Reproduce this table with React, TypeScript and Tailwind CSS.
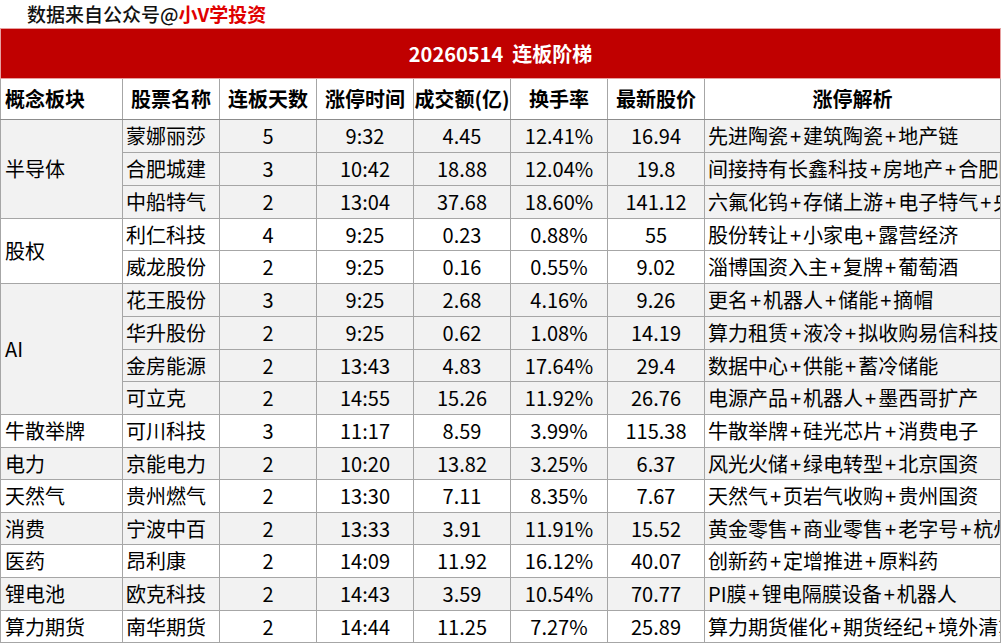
type Stock = {
  name: string;
  days: number;
  time: string;
  amount: string;
  turnover: string;
  price: string;
  reason: string;
};

type Group = { concept: string; stocks: Stock[] };

const groups: Group[] = [
  {
    concept: "半导体",
    stocks: [
      { name: "蒙娜丽莎", days: 5, time: "9:32", amount: "4.45", turnover: "12.41%", price: "16.94", reason: "先进陶瓷+建筑陶瓷+地产链" },
      { name: "合肥城建", days: 3, time: "10:42", amount: "18.88", turnover: "12.04%", price: "19.8", reason: "间接持有长鑫科技+房地产+合肥国资" },
      { name: "中船特气", days: 2, time: "13:04", amount: "37.68", turnover: "18.60%", price: "141.12", reason: "六氟化钨+存储上游+电子特气+央企" },
    ],
  },
  {
    concept: "股权",
    stocks: [
      { name: "利仁科技", days: 4, time: "9:25", amount: "0.23", turnover: "0.88%", price: "55", reason: "股份转让+小家电+露营经济" },
      { name: "威龙股份", days: 2, time: "9:25", amount: "0.16", turnover: "0.55%", price: "9.02", reason: "淄博国资入主+复牌+葡萄酒" },
    ],
  },
  {
    concept: "AI",
    stocks: [
      { name: "花王股份", days: 3, time: "9:25", amount: "2.68", turnover: "4.16%", price: "9.26", reason: "更名+机器人+储能+摘帽" },
      { name: "华升股份", days: 2, time: "9:25", amount: "0.62", turnover: "1.08%", price: "14.19", reason: "算力租赁+液冷+拟收购易信科技" },
      { name: "金房能源", days: 2, time: "13:43", amount: "4.83", turnover: "17.64%", price: "29.4", reason: "数据中心+供能+蓄冷储能" },
      { name: "可立克", days: 2, time: "14:55", amount: "15.26", turnover: "11.92%", price: "26.76", reason: "电源产品+机器人+墨西哥扩产" },
    ],
  },
  {
    concept: "牛散举牌",
    stocks: [
      { name: "可川科技", days: 3, time: "11:17", amount: "8.59", turnover: "3.99%", price: "115.38", reason: "牛散举牌+硅光芯片+消费电子" },
    ],
  },
  {
    concept: "电力",
    stocks: [
      { name: "京能电力", days: 2, time: "10:20", amount: "13.82", turnover: "3.25%", price: "6.37", reason: "风光火储+绿电转型+北京国资" },
    ],
  },
  {
    concept: "天然气",
    stocks: [
      { name: "贵州燃气", days: 2, time: "13:30", amount: "7.11", turnover: "8.35%", price: "7.67", reason: "天然气+页岩气收购+贵州国资" },
    ],
  },
  {
    concept: "消费",
    stocks: [
      { name: "宁波中百", days: 2, time: "13:33", amount: "3.91", turnover: "11.91%", price: "15.52", reason: "黄金零售+商业零售+老字号+杭州" },
    ],
  },
  {
    concept: "医药",
    stocks: [
      { name: "昂利康", days: 2, time: "14:09", amount: "11.92", turnover: "16.12%", price: "40.07", reason: "创新药+定增推进+原料药" },
    ],
  },
  {
    concept: "锂电池",
    stocks: [
      { name: "欧克科技", days: 2, time: "14:43", amount: "3.59", turnover: "10.54%", price: "70.77", reason: "PI膜+锂电隔膜设备+机器人" },
    ],
  },
  {
    concept: "算力期货",
    stocks: [
      { name: "南华期货", days: 2, time: "14:44", amount: "11.25", turnover: "7.27%", price: "25.89", reason: "算力期货催化+期货经纪+境外清算" },
    ],
  },
];

const headers = ["概念板块", "股票名称", "连板天数", "涨停时间", "成交额(亿)", "换手率", "最新股价", "涨停解析"];

// row heights as they fall in the source sheet (px)
const rowH = [
  "h-[33px]", "h-[33px]", "h-[33px]", "h-[32px]", "h-[33px]", "h-[33px]", "h-[33px]", "h-[32px]",
  "h-[33px]", "h-[33px]", "h-[32px]", "h-[33px]", "h-[32px]", "h-[33px]", "h-[33px]", "h-[32px]",
];

const cell = "border border-[#a6a6a6] whitespace-nowrap overflow-hidden p-0";

// the plus signs in the source sheet sit wider than in Noto's metrics
function Reason({ text }: { text: string }) {
  const parts = text.split("+");
  return (
    <>
      {parts.map((p, i) => (
        <span key={i}>
          {i > 0 && <span className="px-[2px]">+</span>}
          {p}
        </span>
      ))}
    </>
  );
}

export default function App() {
  let idx = 0;
  return (
    <div
      className="w-[1001px] h-[643px] overflow-hidden bg-white text-black"
      style={{ fontFamily: '"Noto Sans CJK SC", "Noto Sans", sans-serif' }}
    >
      <div className="h-[28px] pl-[27px] pt-[2px] text-[19px] leading-[24px]">
        <span className="text-[#111] font-medium">数据来自公众号@</span>
        <span className="text-[#e00000] font-bold">小V学投资</span>
      </div>

      <table className="table-fixed border-collapse w-[1000px] text-[20px] leading-none">
        <colgroup>
          <col className="w-[122px]" />
          <col className="w-[97px]" />
          <col className="w-[97px]" />
          <col className="w-[97px]" />
          <col className="w-[97px]" />
          <col className="w-[97px]" />
          <col className="w-[97px]" />
          <col className="w-[296px]" />
        </colgroup>
        <thead>
          <tr className="h-[50px]">
            <th colSpan={8} className="border border-[#e7a0a0] bg-[#c00000] text-white font-bold text-center">
              <span className="whitespace-pre">20260514  连板阶梯</span>
            </th>
          </tr>
          <tr className="h-[41px]">
            {headers.map((h, i) => (
              <th
                key={h}
                className={`${cell} border-b-[#8c8c8c] font-bold ${i === 0 ? "text-left pl-[4px]" : "text-center"}`}
              >
                {h}
              </th>
            ))}
          </tr>
        </thead>
        <tbody>
          {groups.map((g, gi) => {
            const bg = gi % 2 === 0 ? "bg-[#f2f2f2]" : "bg-white";
            return g.stocks.map((s, si) => (
              <tr key={s.name} className={`${rowH[idx++]} ${bg}`}>
                {si === 0 && (
                  <td rowSpan={g.stocks.length} className={`${cell} text-left pl-[4px]`}>
                    {g.concept}
                  </td>
                )}
                <td className={`${cell} text-left pl-[3px]`}>{s.name}</td>
                <td className={`${cell} text-center`}>{s.days}</td>
                <td className={`${cell} text-center`}>{s.time}</td>
                <td className={`${cell} text-center`}>{s.amount}</td>
                <td className={`${cell} text-center`}>{s.turnover}</td>
                <td className={`${cell} text-center`}>{s.price}</td>
                <td className={`${cell} text-left pl-[3px] text-clip`}>
                  <Reason text={s.reason} />
                </td>
              </tr>
            ));
          })}
        </tbody>
      </table>
    </div>
  );
}
